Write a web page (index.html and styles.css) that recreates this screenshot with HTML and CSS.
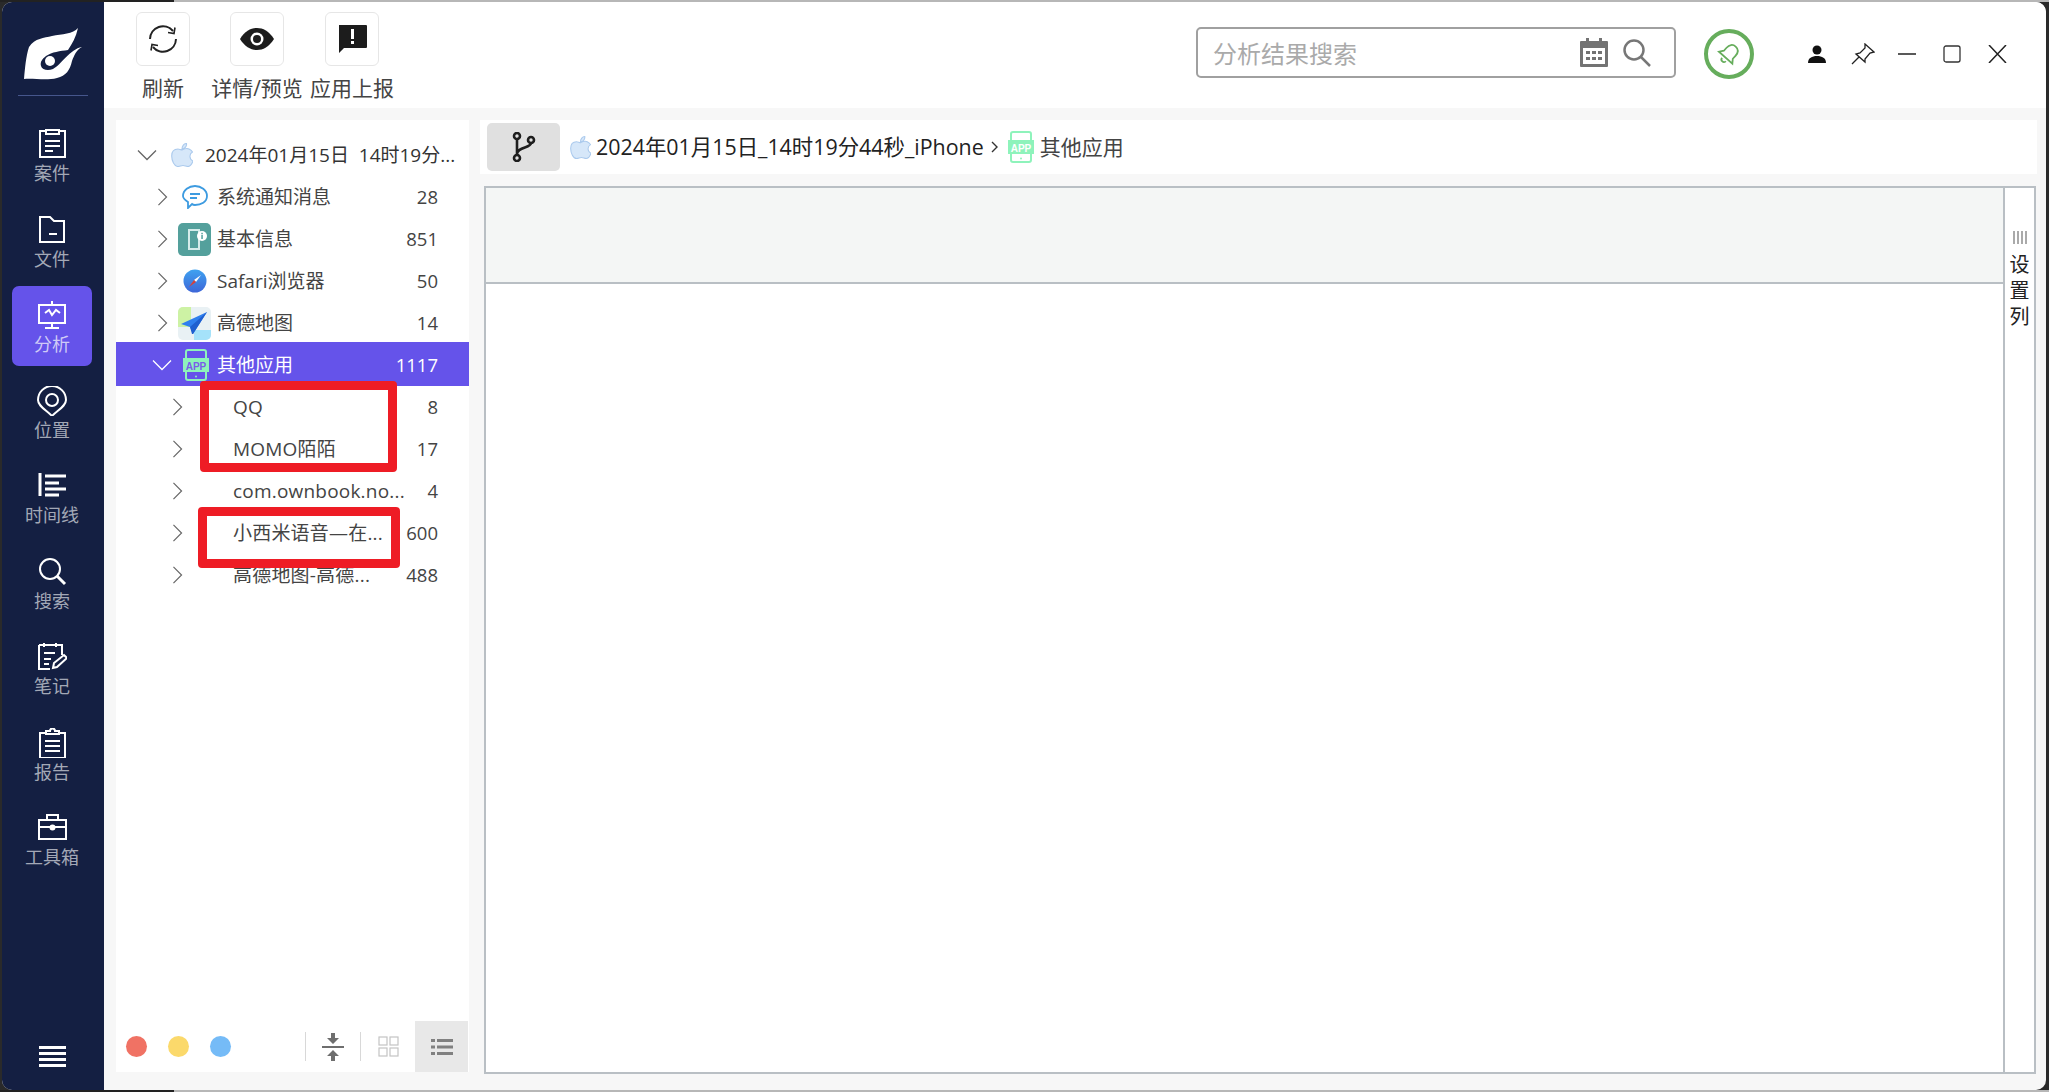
FILE: index.html
```html
<!DOCTYPE html>
<html lang="en">
<head>
<meta charset="UTF-8">
<meta name="viewport" content="width=device-width, initial-scale=1.0">
<title>分析</title>
<link rel="stylesheet" href="styles.css">
</head>
<body>
<svg class="sprite" width="0" height="0">
  <symbol id="apple" viewBox="0 0 22 24">
    <path d="M15.500 .5c.5 3-2 5.500-4.500 5.500 0-3 2-5.500 4.500-5.500zM11 7c2-1 5-2 7-1 2 1 3 2 3.500 3-3.500 2-3.500 7 .5 9-1 3-3 5.500-5 5.500-2 0-3-1-5-1s-3 1-5 1C3 23.500 .7 17 .7 13c0-5 3-7 6.300-7 1 0 3 1 4 1z" fill="#d6e7f9" stroke="#abcaed" stroke-width="1.100"/>
  </symbol>
  <symbol id="chev-right" viewBox="0 0 12 20">
    <path d="M1.500 1l9 9-9 9" fill="none" stroke="#666" stroke-width="1.300"/>
  </symbol>
  <symbol id="chev-down" viewBox="0 0 20 12">
    <path d="M1 1.500l9 9 9-9" fill="none" stroke="currentColor" stroke-width="1.300"/>
  </symbol>
</svg>

<div class="strip"></div>
<div class="window">
  <aside class="sidebar">
    <div class="logo">
      <svg width="60" height="54" viewBox="0 0 60 54"><path d="M0 51C1 40 2 28 5 19 11 10 20 10 28 8 38 6 49 6 54 0 52 9 48 16 44 22 36 23 28 24 22 28 18 31 16 34 17 38 18 42 24 43 29 41 37 37 46 21 58 19 52 22 50 28 48 33 46 42 42 48 33 50 22 53 10 50 0 51z" fill="#fff"/><circle cx="26" cy="33" r="5" fill="#fff"/></svg>
    </div>
    <nav class="nav">
      <a class="nav-item">
        <svg class="nav-icon" viewBox="0 0 30 30"><path d="M9 2H3v26h25V2h-6M9 1h13v4H9zM8 12h15M8 17h15M8 22h8"/></svg>
        <span>案件</span>
      </a>
      <a class="nav-item">
        <svg class="nav-icon" viewBox="0 0 30 30"><path d="M3 2h10l4 4h10v21H3zM12 19h8"/></svg>
        <span>文件</span>
      </a>
      <a class="nav-item active">
        <svg class="nav-icon" viewBox="0 0 30 30"><path d="M2 5h26v18H2zM15 1v4M15 23v4M8 28h14M8 13l4-3 3 5 4-5 4 3"/></svg>
        <span>分析</span>
      </a>
      <a class="nav-item">
        <svg class="nav-icon" viewBox="0 0 30 30"><path d="M15 30C9 24 1 20 1 14a14 14 0 0 1 28 0c0 6-8 10-14 16z"/><circle cx="15" cy="14" r="6"/></svg>
        <span>位置</span>
      </a>
      <a class="nav-item">
        <svg class="nav-icon" viewBox="0 0 30 30"><path class="thick" d="M3 2v23M8 5h21M8 12h14M8 18h21M8 24h14"/></svg>
        <span>时间线</span>
      </a>
      <a class="nav-item">
        <svg class="nav-icon" viewBox="0 0 30 30"><circle cx="13" cy="12" r="10"/><path class="thick" d="M20 19l8 8"/></svg>
        <span>搜索</span>
      </a>
      <a class="nav-item">
        <svg class="nav-icon" viewBox="0 0 30 30"><path d="M7 1v4M19 1v4M2 3h23v10M13 27H2V3M7 11h11M7 17h7M7 22h5M16 26l1-5 10-8 3 3-10 9z"/></svg>
        <span>笔记</span>
      </a>
      <a class="nav-item">
        <svg class="nav-icon" viewBox="0 0 30 30"><path d="M9 5H3v25h25V5h-6M9 6V3h4a2 2 0 0 1 5 0h4v3zM8 13h15M8 18h15M8 23h15"/></svg>
        <span>报告</span>
      </a>
      <a class="nav-item">
        <svg class="nav-icon" viewBox="0 0 30 30"><path d="M2 7h27v19H2zM10 7V2h11v5M2 14h27"/><circle cx="15.500" cy="14.500" r="2" fill="#fff"/></svg>
        <span>工具箱</span>
      </a>
    </nav>
    <div class="hamburger"><i></i><i></i><i></i><i></i></div>
  </aside>

  <div class="body-col">
    <header class="topbar">
      <div class="tools">
        <div class="tool tool-refresh">
          <div class="tool-btn">
            <svg width="30" height="30" viewBox="0 0 30 30" fill="none" stroke="#222" stroke-width="2"><path d="M2 15A13 13 0 0 1 25 7M28 15A13 13 0 0 1 5 23"/><path d="M20 8.500l6 1 1-6M10 21.500l-6-1-1 6" stroke-width="1.600"/></svg>
          </div>
          <span>刷新</span>
        </div>
        <div class="tool tool-detail">
          <div class="tool-btn">
            <svg width="34" height="24" viewBox="0 0 34 24"><path d="M0 12C5 4 11 1 17 1s12 3 17 11c-5 8-11 11-17 11S5 20 0 12z" fill="#1c1c1c"/><circle cx="17" cy="12" r="6.500" fill="#fff"/><circle cx="17" cy="12" r="4" fill="#1c1c1c"/></svg>
          </div>
          <span>详情/预览</span>
        </div>
        <div class="tool tool-report">
          <div class="tool-btn">
            <svg width="30" height="30" viewBox="0 0 30 30"><path d="M2 1h27a1 1 0 0 1 1 1v21a1 1 0 0 1-1 1H7l-5 5z" fill="#1c1c1c"/><rect x="14" y="5" width="3" height="10" fill="#fff"/><rect x="14" y="17" width="3" height="3" fill="#fff"/></svg>
          </div>
          <span>应用上报</span>
        </div>
      </div>
      <div class="search">
        <span class="search-text">分析结果搜索</span>
        <svg width="30" height="30" viewBox="0 0 30 30"><path d="M2 3h26a1 1 0 0 1 1 1v24a1 1 0 0 1-1 1H2a1 1 0 0 1-1-1V4a1 1 0 0 1 1-1z" fill="#737373"/><rect x="7" y="0" width="3" height="6" fill="#737373"/><rect x="20" y="0" width="3" height="6" fill="#737373"/><rect x="4" y="10" width="22" height="16" fill="#fff"/><path d="M7 13h4v3H7zM13 13h4v3h-4zM19 13h4v3h-4zM7 19h4v3H7zM13 19h4v3h-4zM19 19h4v3h-4z" fill="#737373"/></svg>
        <svg class="search-mag" width="30" height="28" viewBox="0 0 30 28" fill="none" stroke="#777" stroke-width="2.500"><circle cx="12" cy="11" r="9.500"/><path d="M19 18l9 9"/></svg>
      </div>
      <div class="bell">
        <svg width="26" height="26" viewBox="0 0 26 26" fill="none" stroke="#66ad5c" stroke-width="1.800"><g transform="rotate(42 13 13)"><path d="M13 3c4 0 6 3 6 7v4l3 4H4l3-4v-4c0-4 2-7 6-7z"/><path d="M10.500 20.500a2.500 2.500 0 0 0 5 0"/></g></svg>
      </div>
      <div class="win-btns">
        <svg width="18" height="18" viewBox="0 0 18 18"><circle cx="9" cy="5" r="4.500" fill="#111"/><path d="M0 18c0-5 4-7 9-7s9 2 9 7z" fill="#111"/></svg>
        <svg width="24" height="22" viewBox="0 0 24 22" fill="none" stroke="#222" stroke-width="1.300"><path d="M14 1l9 8-4 1-5 6 0 3-9-8 4-1 5-5zM8 14l-7 7"/></svg>
        <svg class="win-min" width="18" height="18" viewBox="0 0 18 18" stroke="#222" stroke-width="1.500"><path d="M0 9h18"/></svg>
        <svg class="win-max" width="18" height="18" viewBox="0 0 18 18" fill="none" stroke="#333" stroke-width="1.300"><rect x="1" y="1" width="16" height="16" rx="2"/></svg>
        <svg class="win-close" width="19" height="18" viewBox="0 0 19 18" stroke="#222" stroke-width="1.500"><path d="M1 0l17 18M18 0L1 18"/></svg>
      </div>
    </header>

    <main class="content">
      <section class="tree-panel">
        <div class="tree">
          <div class="row row-root">
            <svg class="chev-down" width="20" height="12"><use href="#chev-down"/></svg>
            <svg class="row-apple" width="22" height="24"><use href="#apple"/></svg>
            <span class="name">2024年01月15日&nbsp; 14时19分...</span>
          </div>
          <div class="row row-app">
            <svg class="chev" width="11" height="18"><use href="#chev-right"/></svg>
            <span class="app-icon">
              <svg width="26" height="24" viewBox="0 0 26 24" fill="none" stroke="#3d9be0" stroke-width="1.800"><path d="M13 1c6 0 12 4 12 10s-6 9-12 9c-1 0-2 0-3-1l-4 4v-6C3 15 1 13 1 11 1 5 7 1 13 1z"/><path d="M8 9h10M8 13h7"/></svg>
            </span>
            <span class="name">系统通知消息</span>
            <span class="count">28</span>
          </div>
          <div class="row row-app">
            <svg class="chev" width="11" height="18"><use href="#chev-right"/></svg>
            <span class="app-icon">
              <svg width="33" height="33" viewBox="0 0 33 33"><rect width="33" height="33" rx="5" fill="#54a09c"/><path d="M11 7h10v19H11z" fill="none" stroke="#d5ecea" stroke-width="2"/><circle cx="24" cy="13" r="5" fill="#fff"/><rect x="23.300" y="12" width="1.500" height="4" fill="#54a09c"/><rect x="23.300" y="9.800" width="1.500" height="1.500" fill="#54a09c"/></svg>
            </span>
            <span class="name">基本信息</span>
            <span class="count">851</span>
          </div>
          <div class="row row-app">
            <svg class="chev" width="11" height="18"><use href="#chev-right"/></svg>
            <span class="app-icon">
              <svg width="24" height="24" viewBox="0 0 24 24"><defs><linearGradient id="safari" x1="0" y1="0" x2="0" y2="1"><stop offset="0" stop-color="#3fa2f0"/><stop offset="1" stop-color="#3d66d8"/></linearGradient></defs><circle cx="12" cy="12" r="11.500" fill="url(#safari)"/><path d="M18 6l-7 5 2 2z" fill="#fff"/><path d="M6 18l5-7 2 2z" fill="#d8403a"/></svg>
            </span>
            <span class="name">Safari浏览器</span>
            <span class="count">50</span>
          </div>
          <div class="row row-app">
            <svg class="chev" width="11" height="18"><use href="#chev-right"/></svg>
            <span class="app-icon">
              <svg width="33" height="33" viewBox="0 0 33 33"><rect width="33" height="33" rx="5" fill="#e9f1f4"/><path d="M0 5a5 5 0 0 1 5-5h8v20H0z" fill="#cdf2a4"/><path d="M16 23h17v5a5 5 0 0 1-5 5H16z" fill="#a5e2fa"/><path d="M29 5L3 17l9 3 3 7z" fill="#2f7fee"/><path d="M29 5L12 20l2 7 1 0z" fill="#1f5fcf"/></svg>
            </span>
            <span class="name">高德地图</span>
            <span class="count">14</span>
          </div>
          <div class="row row-app selected">
            <svg class="chev-down chev-sel" width="20" height="12"><use href="#chev-down"/></svg>
            <span class="app-icon">
              <svg width="26" height="32" viewBox="0 0 26 32"><path d="M5 1h16a2 2 0 0 1 2 2v26a2 2 0 0 1-2 2H5a2 2 0 0 1-2-2V3a2 2 0 0 1 2-2z" fill="none" stroke="#8ef3bb" stroke-width="2"/><rect x="0" y="9" width="26" height="14" fill="#8ef3bb"/><text class="app-label" x="13" y="20.500" fill="#7a5bea">APP</text><circle cx="13" cy="27.500" r="1" fill="#8ef3bb"/></svg>
            </span>
            <span class="name">其他应用</span>
            <span class="count">1117</span>
          </div>
          <div class="row row-child">
            <svg class="chev" width="11" height="18"><use href="#chev-right"/></svg>
            <span class="name">QQ</span>
            <span class="count">8</span>
          </div>
          <div class="row row-child">
            <svg class="chev" width="11" height="18"><use href="#chev-right"/></svg>
            <span class="name">MOMO陌陌</span>
            <span class="count">17</span>
          </div>
          <div class="row row-child">
            <svg class="chev" width="11" height="18"><use href="#chev-right"/></svg>
            <span class="name">com.ownbook.no...</span>
            <span class="count">4</span>
          </div>
          <div class="row row-child">
            <svg class="chev" width="11" height="18"><use href="#chev-right"/></svg>
            <span class="name">小西米语音—在...</span>
            <span class="count">600</span>
          </div>
          <div class="row row-child">
            <svg class="chev" width="11" height="18"><use href="#chev-right"/></svg>
            <span class="name">高德地图-高德...</span>
            <span class="count">488</span>
          </div>
        </div>
        <div class="tree-foot">
          <i class="dot dot-red"></i>
          <i class="dot dot-yellow"></i>
          <i class="dot dot-blue"></i>
          <i class="sep sep-first"></i>
          <svg class="foot-fold" width="22" height="28" viewBox="0 0 22 28" fill="#6e6e6e"><rect x="0" y="13" width="22" height="2"/><path d="M11 11L5 5h4V0h4v5h4zM11 17l6 6h-4v5H9v-5H5z"/></svg>
          <i class="sep"></i>
          <svg class="foot-grid" width="21" height="21" viewBox="0 0 21 21" fill="none" stroke="#c4c4c4" stroke-width="1.200"><rect x="1" y="1" width="8" height="8"/><rect x="12" y="1" width="8" height="8"/><rect x="1" y="12" width="8" height="8"/><rect x="12" y="12" width="8" height="8"/></svg>
          <div class="foot-list">
            <svg width="22" height="18" viewBox="0 0 22 18" fill="#808080"><path d="M0 1h4v3H0zM6 1h16v3H6zM0 7.500h4v3H0zM6 7.500h16v3H6zM0 14h4v3H0zM6 14h16v3H6z"/></svg>
          </div>
        </div>
      </section>

      <section class="right-col">
        <div class="crumb">
          <div class="crumb-btn">
            <svg width="24" height="30" viewBox="0 0 24 30" fill="none" stroke="#1e1e1e" stroke-width="2.600"><circle cx="5" cy="4" r="3"/><circle cx="5" cy="26" r="3"/><circle cx="19" cy="8" r="3"/><path d="M5 7v16M19 11c0 5-14 4-14 11"/></svg>
          </div>
          <svg class="crumb-apple" width="21" height="25"><use href="#apple"/></svg>
          <span class="crumb-path">2024年01月15日_14时19分44秒_iPhone</span>
          <svg class="crumb-sep" width="7" height="12" viewBox="0 0 7 12" fill="none" stroke="#333" stroke-width="1.400"><path d="M1 1l5 5-5 5"/></svg>
          <svg class="crumb-app" width="26" height="32" viewBox="0 0 26 32"><path d="M5 1h16a2 2 0 0 1 2 2v26a2 2 0 0 1-2 2H5a2 2 0 0 1-2-2V3a2 2 0 0 1 2-2z" fill="none" stroke="#8ef3bb" stroke-width="2"/><rect x="0" y="9" width="26" height="14" fill="#8ef3bb"/><text class="app-label" x="13" y="20.500" fill="#fff">APP</text><circle cx="13" cy="27.500" r="1" fill="#8ef3bb"/></svg>
          <span class="crumb-cur">其他应用</span>
        </div>
        <div class="table">
          <div class="table-main">
            <div class="table-head"></div>
          </div>
          <div class="col-setting">
            <div class="grip"><i></i><i></i><i></i><i></i></div>
            <span>设</span>
            <span>置</span>
            <span>列</span>
          </div>
        </div>
      </section>
    </main>
  </div>

  <div class="mark mark-a"></div>
  <div class="mark mark-b"></div>
</div>
<div class="strip"></div>
</body>
</html>
```
FILE: styles.css
```css
* {
  box-sizing: border-box;
}

html, body {
  margin: 0;
  padding: 0;
  height: 100%;
  overflow: hidden;
}

body {
  background-color: #2a2a2a;
  font-family: "Open Sans", "Noto Sans CJK SC", sans-serif;
  color: #333;
}

.sprite {
  position: absolute;
}

.strip {
  height: 2px;
  background: linear-gradient(to right, #222 174px, #b7b7b7 174px);
}

.window {
  position: relative;
  display: flex;
  height: 1088px;
  margin: 0 3px 0 2px;
  border-radius: 10px;
  overflow: hidden;
  background-color: #f7f7f7;
}

/* sidebar */
.sidebar {
  display: flex;
  flex-direction: column;
  width: 102px;
  flex-shrink: 0;
  background-color: #141f42;
}

.logo {
  height: 94px;
  margin: 0 16px;
  padding: 26px 0 0 6px;
  border-bottom: 1px solid #46568c;
}

.nav {
  display: flex;
  flex-direction: column;
  gap: 5.5px;
  padding: 19px 12px 0 10px;
}

.nav-item {
  display: flex;
  flex-direction: column;
  align-items: center;
  height: 80px;
  padding-top: 14px;
  border-radius: 7px;
  font-size: 18px;
  line-height: 22px;
  color: #a3a8b6;
}

.nav-item.active {
  background-color: #6553ea;
  color: #cfcaf6;
}

.nav-icon {
  width: 30px;
  height: 30px;
  margin-bottom: 3px;
  fill: none;
  stroke: #fff;
  stroke-width: 2;
}

.nav-icon .thick {
  stroke-width: 3;
}

.hamburger {
  display: flex;
  flex-direction: column;
  gap: 3px;
  width: 27px;
  margin: auto 0 23px 37px;
}

.hamburger i {
  height: 3px;
  background-color: #fff;
}

/* top bar */
.body-col {
  display: flex;
  flex-direction: column;
  flex: 1;
  min-width: 0;
}

.topbar {
  display: flex;
  align-items: flex-start;
  height: 106px;
  flex-shrink: 0;
  background-color: #fff;
}

.tools {
  display: flex;
  width: 1092px;
  padding-left: 32px;
}

.tool {
  display: flex;
  flex-direction: column;
  align-items: center;
  padding-top: 10px;
  font-size: 21px;
  line-height: 28px;
  color: #444;
}

.tool span {
  margin-top: 8px;
  white-space: nowrap;
}

.tool-btn {
  display: flex;
  align-items: center;
  justify-content: center;
  width: 54px;
  height: 54px;
  border: 1px solid #e6e6e6;
  border-radius: 6px;
}

.tool-refresh {
  width: 54px;
}

.tool-detail {
  width: 94px;
  margin-left: 20px;
}

.tool-report {
  width: 84px;
  margin-left: 6px;
}

.search {
  display: flex;
  align-items: center;
  width: 480px;
  height: 51px;
  margin-top: 25px;
  padding: 0 22px 0 15px;
  border: 2px solid #a0a0a0;
  border-radius: 5px;
}

.search-text {
  flex: 1;
  font-size: 24px;
  color: #aaa;
}

.search-mag {
  margin-left: 13px;
}

.bell {
  display: flex;
  align-items: center;
  justify-content: center;
  width: 50px;
  height: 50px;
  margin: 27px 0 0 28px;
  border: 4px solid #66ad5c;
  border-radius: 50%;
}

.win-btns {
  display: flex;
  align-items: center;
  gap: 25px;
  margin: 41px 0 0 54px;
}

.win-min {
  margin-left: -2px;
}

.win-max,
.win-close {
  margin-left: 2px;
}

/* content */
.content {
  display: flex;
  flex: 1;
  min-height: 0;
  gap: 11px;
  padding: 12px 9px 16px 12px;
}

.tree-panel {
  display: flex;
  flex-direction: column;
  justify-content: space-between;
  width: 353px;
  height: 952px;
  flex-shrink: 0;
  background-color: #fff;
}

.tree {
  padding-top: 13px;
  font-size: 19px;
}

.row {
  display: flex;
  align-items: center;
  height: 42px;
  line-height: 40px;
  padding-top: 2px;
  padding-right: 31px;
  color: #444;
}

.name {
  flex: 1;
  white-space: nowrap;
}

.count {
  color: #444;
  font-size: 18.500px;
}

.row-root {
  padding-left: 21px;
  padding-right: 0;
  color: #333;
}

.row-apple {
  flex-shrink: 0;
  margin: 0 12px 0 14px;
}

.row-app {
  padding-left: 41px;
}

.chev {
  flex-shrink: 0;
}

.chev-down {
  color: #666;
  flex-shrink: 0;
}

.app-icon {
  display: flex;
  align-items: center;
  justify-content: center;
  width: 33px;
  margin: 0 6px 0 10px;
}

.row-child {
  padding-left: 56px;
}

.row-child .name {
  margin-left: 50px;
  letter-spacing: 0.2px;
}

.row.selected {
  padding-left: 36px;
  background-color: #6553ea;
  box-shadow: 0 -1px #6553ea, 0 1px #6553ea;
  color: #fff;
}

.selected .count {
  color: #fff;
}

.chev-sel {
  color: #fff;
}

.selected .app-icon {
  margin: 0 5px 0 7px;
}

.app-label {
  font-family: "Liberation Sans", sans-serif;
  font-size: 10px;
  font-weight: bold;
  text-anchor: middle;
}

.tree-foot {
  display: flex;
  align-items: center;
  height: 51px;
  padding-left: 10px;
}

.dot {
  width: 21px;
  height: 21px;
  margin-right: 21px;
  border-radius: 50%;
}

.dot-red {
  background-color: #f07264;
}

.dot-yellow {
  background-color: #fbd96b;
}

.dot-blue {
  background-color: #75bbf7;
}

.sep {
  width: 1px;
  height: 29px;
  background-color: #d8d8d8;
}

.sep-first {
  margin-left: 53px;
}

.foot-fold {
  margin: 0 16px 0 16px;
}

.foot-grid {
  margin: 0 16px 0 17px;
}

.foot-list {
  display: flex;
  align-items: center;
  justify-content: center;
  width: 53px;
  height: 51px;
  background-color: #e8e8e8;
}

/* right side */
.right-col {
  display: flex;
  flex-direction: column;
  flex: 1;
  min-width: 0;
  gap: 12px;
}

.crumb {
  display: flex;
  align-items: center;
  height: 54px;
  padding-left: 7px;
  background-color: #fff;
  font-size: 21px;
  color: #222;
  white-space: nowrap;
}

.crumb-btn {
  display: flex;
  align-items: center;
  justify-content: center;
  width: 73px;
  height: 48px;
  border-radius: 5px;
  background-color: #e0e0e0;
}

.crumb-apple {
  margin: 0 5px 0 10px;
}

.crumb-path {
  margin-bottom: 3px;
  font-size: 21.400px;
}

.crumb-sep {
  margin: 0 10px 0 7px;
}

.crumb-cur {
  margin: 0 0 3px 6px;
  color: #444;
}

.table {
  display: flex;
  height: 888px;
  margin-left: 4px;
  width: 1552px;
  border: 2px solid #b9bfc4;
  background-color: #fff;
}

.table-main {
  flex: 1;
  border-right: 2px solid #b9bfc4;
}

.table-head {
  height: 96px;
  background-color: #f4f6f5;
  border-bottom: 2px solid #b9bfc4;
}

.col-setting {
  display: flex;
  flex-direction: column;
  align-items: center;
  width: 29px;
  padding-top: 43px;
  font-size: 20px;
  line-height: 26px;
  color: #222;
}

.grip {
  display: flex;
  gap: 2px;
  height: 13px;
  margin-bottom: 8px;
}

.grip i {
  width: 2px;
  background-color: #aaa;
}

/* red marks drawn over the screenshot */
.mark {
  position: absolute;
  border: 9px solid #ee1c25;
  border-radius: 4px;
}

.mark-a {
  left: 198px;
  top: 379px;
  width: 197px;
  height: 91px;
}

.mark-b {
  left: 196px;
  top: 505px;
  width: 202px;
  height: 61px;
}
```
